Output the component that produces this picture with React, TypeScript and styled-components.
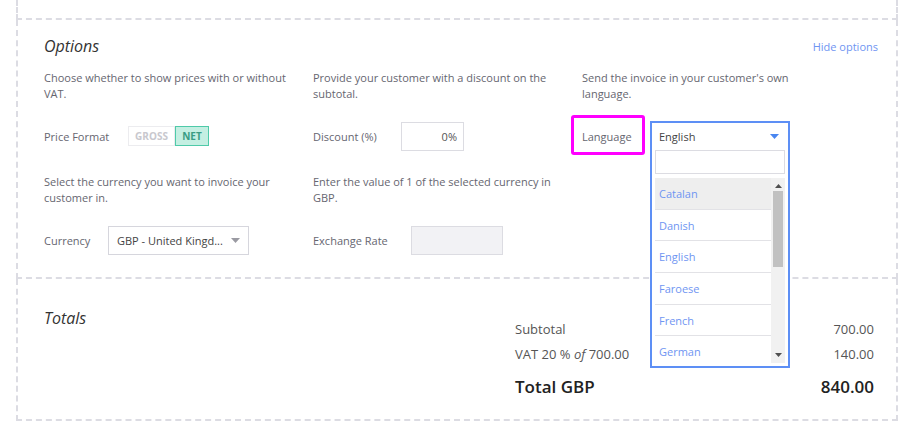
import styled, { createGlobalStyle } from "styled-components";

const GlobalStyle = createGlobalStyle`
  body {
    margin: 0;
    background: #ffffff;
    font-family: "Open Sans", "Liberation Sans", sans-serif;
    color: #555;
  }
`;

const Page = styled.div`
  width: 882px;
  margin-left: 16px;
`;

const Section = styled.div<{ $h?: number }>`
  border-left: 2px dashed #dcdce3;
  border-right: 2px dashed #dcdce3;
  border-bottom: 2px dashed #dcdce3;
  ${(p) => (p.$h !== undefined ? `height: ${p.$h}px;` : "")}
`;

const OptionsSection = styled(Section)`
  padding: 15px 18px 22px 26px;
  font-size: 11px;
`;

const TitleRow = styled.div`
  display: flex;
  justify-content: space-between;
  align-items: center;
  height: 22px;
  margin-bottom: 12px;
`;

const Title = styled.h2`
  margin: 0;
  font-size: 16px;
  font-weight: 400;
  font-style: italic;
  color: #333;
  line-height: 22px;
`;

const HideLink = styled.a`
  font-size: 11px;
  color: #6f95f2;
  text-decoration: none;
  cursor: pointer;
`;

const Grid = styled.div`
  display: grid;
  grid-template-columns: 269px 269px auto;
  grid-template-rows: 32px 30px 34px 30px;
  row-gap: 20px;
`;

const Desc = styled.p<{ $push?: number }>`
  margin: 0;
  font-size: 11px;
  line-height: 16px;
  color: #666670;
  width: 250px;
  ${(p) => (p.$push ? `margin-top: ${p.$push}px;` : "")}
`;

const Control = styled.div`
  display: flex;
  align-items: center;
  height: 30px;
  position: relative;
`;

const Label = styled.span<{ $w: number }>`
  width: ${(p) => p.$w}px;
  flex: none;
  font-size: 11px;
  color: #666670;
`;

const Highlight = styled.div`
  position: absolute;
  left: -11px;
  top: -6px;
  width: 68px;
  height: 34px;
  border: 3px solid #ff00ff;
  border-radius: 3px;
`;

const Toggle = styled.div`
  display: flex;
  height: 20px;
`;

const ToggleOpt = styled.span<{ $on?: boolean; $w: number }>`
  width: ${(p) => p.$w}px;
  box-sizing: border-box;
  display: flex;
  align-items: center;
  justify-content: center;
  font-size: 10px;
  font-weight: 700;
  border: 1px solid ${(p) => (p.$on ? "#4fcaa9" : "#ececef")};
  background: ${(p) => (p.$on ? "#c4efe2" : "#ffffff")};
  color: ${(p) => (p.$on ? "#3a9c84" : "#c8c8ce")};
`;

const Input = styled.div<{ $w: number; $disabled?: boolean }>`
  width: ${(p) => p.$w}px;
  height: 29px;
  box-sizing: border-box;
  border: 1px solid #dcdce2;
  background: ${(p) => (p.$disabled ? "#f2f2f5" : "#ffffff")};
  display: flex;
  align-items: center;
  justify-content: flex-end;
  padding-right: 6px;
  font-size: 11px;
  color: #555;
`;

const Select = styled.div`
  width: 141px;
  height: 29px;
  box-sizing: border-box;
  border: 1px solid #d6d6dd;
  display: flex;
  align-items: center;
  justify-content: space-between;
  padding: 0 8px 0 8px;
  font-size: 11px;
  color: #444;
  white-space: nowrap;
`;

const Caret = ({ color }: { color: string }) => (
  <svg width="9" height="5" viewBox="0 0 9 5">
    <path d="M0 0 H9 L4.5 5 Z" fill={color} />
  </svg>
);

const Dropdown = styled.div`
  position: absolute;
  left: 68px;
  top: 0;
  width: 140px;
  box-sizing: border-box;
  border: 2px solid #5d8ff5;
  background: #fff;
  z-index: 2;
`;

const DropHead = styled.div`
  height: 27px;
  display: flex;
  align-items: center;
  justify-content: space-between;
  padding: 0 9px 0 7px;
  font-size: 11px;
  color: #444;
`;

const Search = styled.div`
  margin: 0 3px;
  height: 24px;
  box-sizing: border-box;
  border: 1px solid #dcdce2;
`;

const ListWrap = styled.div`
  display: flex;
  margin: 4px 3px 3px 3px;
  height: 185px;
  overflow: hidden;
`;

const List = styled.ul`
  flex: 1;
  margin: 0;
  padding: 0;
  list-style: none;
`;

const Item = styled.li<{ $active?: boolean }>`
  height: 30.7px;
  border-bottom: 1px solid #e2e2e6;
  background: ${(p) => (p.$active ? "#eeeeee" : "#ffffff")};
  display: flex;
  align-items: center;
  padding-left: 4px;
  font-size: 11px;
  color: #6f95f2;
`;

const ScrollTrack = styled.div`
  width: 14px;
  background: #f1f1f1;
  display: flex;
  flex-direction: column;
  align-items: center;
  justify-content: space-between;
  padding: 6px 0 6px;
  box-sizing: border-box;
`;

const Thumb = styled.div`
  width: 10px;
  height: 76px;
  background: #c1c1c1;
  margin-top: 3px;
`;

const Spacer = styled.div`
  flex: 1;
`;

const ScrollArrow = ({ up }: { up?: boolean }) => (
  <svg width="7" height="4" viewBox="0 0 7 4">
    <path d={up ? "M0 4 H7 L3.5 0 Z" : "M0 0 H7 L3.5 4 Z"} fill="#505050" />
  </svg>
);

const TotalsSection = styled(Section)`
  display: flex;
  justify-content: space-between;
  padding: 28px 22px 17px 26px;
`;

const TotalsTable = styled.div`
  width: 359px;
  margin-top: 9px;
`;

const Row = styled.div<{ $big?: boolean }>`
  display: flex;
  justify-content: space-between;
  align-items: center;
  height: ${(p) => (p.$big ? 32 : 25)}px;
  margin-top: ${(p) => (p.$big ? 4 : 0)}px;
  font-size: ${(p) => (p.$big ? 17 : 13)}px;
  font-weight: ${(p) => (p.$big ? 600 : 400)};
  color: ${(p) => (p.$big ? "#222" : "#555")};
  em {
    font-style: italic;
  }
`;

const languages = ["Catalan", "Danish", "English", "Faroese", "French", "German"];

function App() {
  return (
    <Page>
      <GlobalStyle />
      <Section $h={18} />
      <OptionsSection>
        <TitleRow>
          <Title>Options</Title>
          <HideLink>Hide options</HideLink>
        </TitleRow>
        <Grid>
          <Desc $push={1}>Choose whether to show prices with or without VAT.</Desc>
          <Desc $push={1}>Provide your customer with a discount on the subtotal.</Desc>
          <Desc $push={1}>Send the invoice in your customer's own language.</Desc>

          <Control>
            <Label $w={84}>Price Format</Label>
            <Toggle>
              <ToggleOpt $w={47}>GROSS</ToggleOpt>
              <ToggleOpt $w={34} $on>
                NET
              </ToggleOpt>
            </Toggle>
          </Control>
          <Control>
            <Label $w={88}>Discount (%)</Label>
            <Input $w={63}>0%</Input>
          </Control>
          <Control>
            <Highlight />
            <Label $w={68}>Language</Label>
            <Dropdown>
              <DropHead>
                English
                <Caret color="#4a86f0" />
              </DropHead>
              <Search />
              <ListWrap>
                <List>
                  {languages.map((l, i) => (
                    <Item key={l} $active={i === 0}>
                      {l}
                    </Item>
                  ))}
                </List>
                <ScrollTrack>
                  <ScrollArrow up />
                  <Thumb />
                  <Spacer />
                  <ScrollArrow />
                </ScrollTrack>
              </ListWrap>
            </Dropdown>
          </Control>

          <Desc $push={3}>Select the currency you want to invoice your customer in.</Desc>
          <Desc $push={3}>Enter the value of 1 of the selected currency in GBP.</Desc>
          <div />

          <Control>
            <Label $w={64}>Currency</Label>
            <Select>
              GBP - United Kingd...
              <Caret color="#9a9aa2" />
            </Select>
          </Control>
          <Control>
            <Label $w={98}>Exchange Rate</Label>
            <Input $w={92} $disabled />
          </Control>
          <div />
        </Grid>
      </OptionsSection>
      <TotalsSection>
        <Title>Totals</Title>
        <TotalsTable>
          <Row>
            <span>Subtotal</span>
            <span>700.00</span>
          </Row>
          <Row>
            <span>
              VAT 20 % <em>of</em> 700.00
            </span>
            <span>140.00</span>
          </Row>
          <Row $big>
            <span>Total GBP</span>
            <span>840.00</span>
          </Row>
        </TotalsTable>
      </TotalsSection>
    </Page>
  );
}

export default App;
